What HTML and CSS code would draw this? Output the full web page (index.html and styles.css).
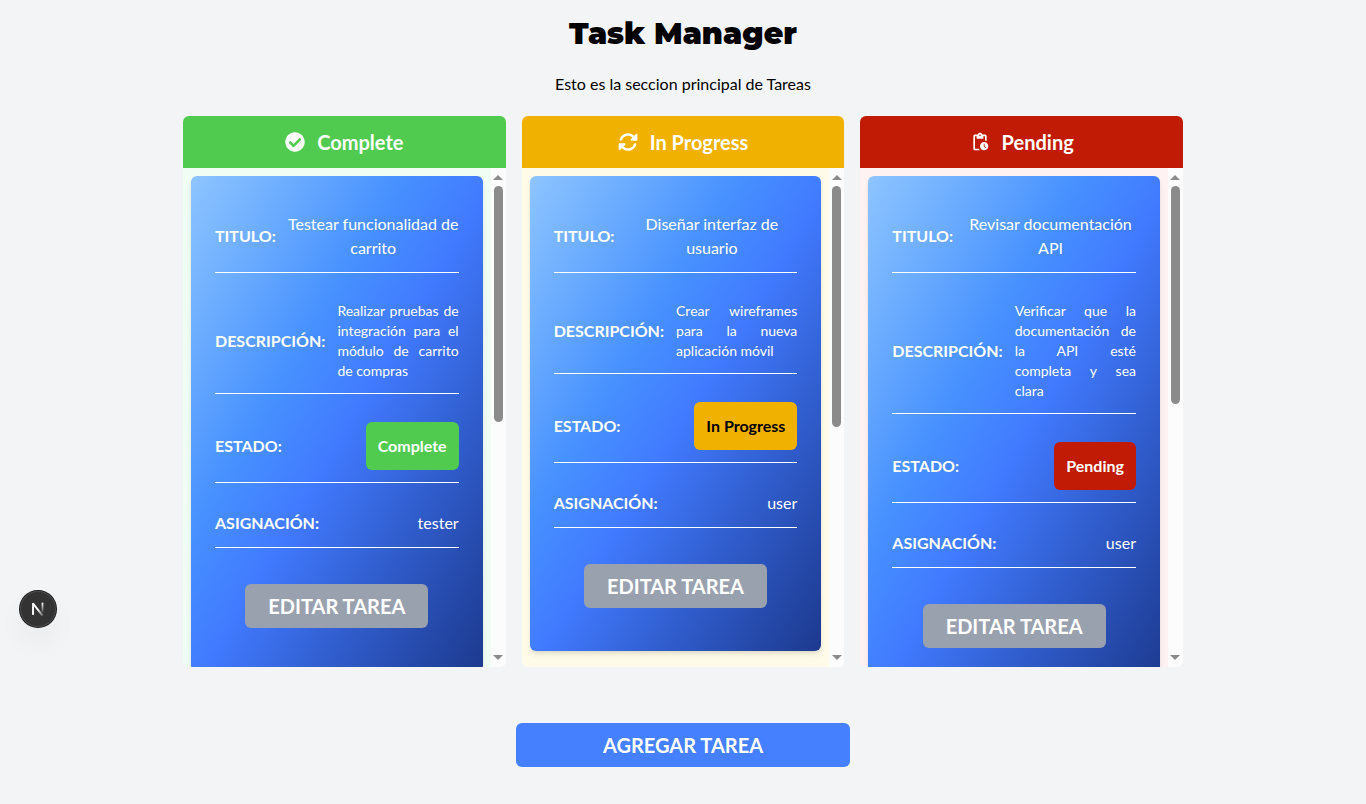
FILE: index.html
```html
<!DOCTYPE html>
<html lang="es">
<head>
<meta charset="utf-8">
<meta name="viewport" content="width=device-width, initial-scale=1">
<title>Task Manager</title>
<link rel="stylesheet" href="styles.css">
</head>
<body>
<main class="page">
  <h1 class="title">Task Manager</h1>
  <p class="subtitle">Esto es la seccion principal de Tareas</p>

  <div class="board">
    <section class="column complete">
      <h2 class="column-head">
        <svg class="icon" viewBox="0 0 512 512" fill="currentColor" aria-hidden="true"><path d="M504 256c0 136.967-111.033 248-248 248S8 392.967 8 256 119.033 8 256 8s248 111.033 248 248zM227.314 387.314l184-184c6.248-6.248 6.248-16.379 0-22.627l-22.627-22.627c-6.248-6.249-16.379-6.249-22.628 0L216 308.118l-70.059-70.059c-6.248-6.248-16.379-6.248-22.628 0l-22.627 22.627c-6.248 6.248-6.248 16.379 0 22.627l104 104c6.249 6.249 16.379 6.249 22.628.001z"/></svg>
        Complete
      </h2>
      <div class="column-body">
        <div class="list">
          <article class="card">
            <dl class="fields">
              <div class="field"><dt>TITULO:</dt><dd class="name">Testear funcionalidad de carrito</dd></div>
              <div class="field"><dt>DESCRIPCIÓN:</dt><dd class="description">Realizar pruebas de integración para el módulo de carrito de compras</dd></div>
              <div class="field"><dt>ESTADO:</dt><dd class="badge">Complete</dd></div>
              <div class="field"><dt>ASIGNACIÓN:</dt><dd>tester</dd></div>
            </dl>
            <button class="button edit" type="button">EDITAR TAREA</button>
          </article>
        </div>
        <div class="scrollbar" aria-hidden="true">
          <span class="arrow up"></span>
          <div class="track"><div class="thumb" style="height: 51%"></div></div>
          <span class="arrow down"></span>
        </div>
      </div>
    </section>

    <section class="column progress">
      <h2 class="column-head">
        <svg class="icon" viewBox="0 0 512 512" fill="currentColor" aria-hidden="true"><path d="M142.9 142.900c62.200-62.200 162.700-62.500 225.300-1L327 183c-6.900 6.900-8.900 17.200-5.200 26.200s12.500 14.800 22.200 14.800H472c13.300 0 24-10.700 24-24V72c0-9.700-5.800-18.500-14.800-22.200s-19.300-1.700-26.200 5.200L413.400 96.600c-87.600-86.500-228.700-86.200-315.800 1C73.200 122 55.600 150.700 44.800 181.400c-5.900 16.700 2.900 34.900 19.500 40.800s34.900-2.900 40.800-19.500c7.700-21.800 20.200-42.300 37.800-59.800zM16 312V440c0 9.700 5.800 18.500 14.800 22.200s19.300 1.700 26.200-5.200l41.600-41.600c87.600 86.500 228.700 86.200 315.800-1c24.400-24.400 42.100-53.100 52.900-83.700c5.900-16.700-2.900-34.900-19.500-40.800s-34.900 2.900-40.800 19.500c-7.700 21.800-20.200 42.300-37.800 59.800c-62.200 62.200-162.700 62.500-225.300 1L185 329c6.900-6.900 8.900-17.200 5.200-26.200s-12.500-14.800-22.200-14.800H40c-13.300 0-24 10.700-24 24z"/></svg>
        In Progress
      </h2>
      <div class="column-body">
        <div class="list">
          <article class="card">
            <dl class="fields">
              <div class="field"><dt>TITULO:</dt><dd class="name">Diseñar interfaz de usuario</dd></div>
              <div class="field"><dt>DESCRIPCIÓN:</dt><dd class="description">Crear wireframes para la nueva aplicación móvil</dd></div>
              <div class="field"><dt>ESTADO:</dt><dd class="badge">In Progress</dd></div>
              <div class="field"><dt>ASIGNACIÓN:</dt><dd>user</dd></div>
            </dl>
            <button class="button edit" type="button">EDITAR TAREA</button>
          </article>
        </div>
        <div class="scrollbar" aria-hidden="true">
          <span class="arrow up"></span>
          <div class="track"><div class="thumb" style="height: 52%"></div></div>
          <span class="arrow down"></span>
        </div>
      </div>
    </section>

    <section class="column pending">
      <h2 class="column-head">
        <svg class="icon" viewBox="0 0 24 24" fill="currentColor" aria-hidden="true"><path d="M17 12c-2.760 0-5 2.240-5 5s2.240 5 5 5 5-2.240 5-5-2.240-5-5-5zm1.650 7.350L16.500 17.200V14h1v2.790l1.850 1.850-.7.710zM18 3h-3.180C14.400 1.840 13.300 1 12 1s-2.400.840-2.820 2H6c-1.100 0-2 .9-2 2v15c0 1.100.9 2 2 2h6.110c-.59-.57-1.070-1.250-1.420-2H6V5h2v3h8V5h2v5.080c.71.100 1.380.310 2 .600V5c0-1.100-.9-2-2-2zm-6 2c-.55 0-1-.45-1-1s.45-1 1-1 1 .45 1 1-.45 1-1 1z"/></svg>
        Pending
      </h2>
      <div class="column-body">
        <div class="list">
          <article class="card">
            <dl class="fields">
              <div class="field"><dt>TITULO:</dt><dd class="name">Revisar documentación API</dd></div>
              <div class="field"><dt>DESCRIPCIÓN:</dt><dd class="description">Verificar que la documentación de la API esté completa y sea clara</dd></div>
              <div class="field"><dt>ESTADO:</dt><dd class="badge">Pending</dd></div>
              <div class="field"><dt>ASIGNACIÓN:</dt><dd>user</dd></div>
            </dl>
            <button class="button edit" type="button">EDITAR TAREA</button>
          </article>
        </div>
        <div class="scrollbar" aria-hidden="true">
          <span class="arrow up"></span>
          <div class="track"><div class="thumb" style="height: 47%"></div></div>
          <span class="arrow down"></span>
        </div>
      </div>
    </section>
  </div>

  <button class="button add" type="button">AGREGAR TAREA</button>
</main>

<button class="dev-badge" type="button" aria-label="Next.js">
  <svg class="dev-logo" viewBox="0 0 40 40" fill="none" aria-hidden="true">
    <defs>
      <linearGradient id="stem" x1="0" y1="13" x2="0" y2="25" gradientUnits="userSpaceOnUse"><stop stop-color="#fff"/><stop offset="1" stop-color="#fff" stop-opacity="0"/></linearGradient>
      <linearGradient id="slash" x1="20" y1="20" x2="26" y2="28" gradientUnits="userSpaceOnUse"><stop stop-color="#fff"/><stop offset="1" stop-color="#fff" stop-opacity="0.2"/></linearGradient>
    </defs>
    <path d="M14.500 26.500V13.500" stroke="#fff" stroke-width="2.200"/>
    <path d="M14.300 13.600 25 27.400" stroke="url(#slash)" stroke-width="2.200"/>
    <path d="M25 13V25" stroke="url(#stem)" stroke-width="2"/>
  </svg>
</button>
</body>
</html>
```
FILE: styles.css
```css
* {
  box-sizing: border-box;
}

body,
h1,
h2,
p,
dl,
dd {
  margin: 0;
}

body {
  background: #f3f4f6;
  color: #000;
  font-family: Lato, sans-serif;
  font-size: 16px;
  line-height: 24px;
}

.page {
  display: flex;
  flex-direction: column;
  align-items: center;
  min-height: 100vh;
  padding: 16px;
}

.title {
  font-family: Montserrat, Inter, sans-serif;
  font-size: 30px;
  font-weight: 900;
  line-height: 36px;
}

.subtitle {
  margin-top: 20px;
}

.board {
  display: grid;
  grid-template-columns: repeat(3, minmax(0, 1fr));
  gap: 16px;
  width: 100%;
  max-width: 1000px;
  margin-top: 20px;
}

.column {
  border-radius: 6px;
  overflow: hidden;
}

.complete {
  --accent: #50cb50;
  --tint: #f0fdf4;
  --badge-text: #fff;
}

.progress {
  --accent: #f0b100;
  --tint: #fefce8;
  --badge-text: #000;
}

.pending {
  --accent: #c11a05;
  --tint: #fef2f2;
  --badge-text: #fff;
}

.column-head {
  display: flex;
  align-items: center;
  justify-content: center;
  gap: 12px;
  padding: 12px;
  background: var(--accent);
  color: #fff;
  font-size: 20px;
  font-weight: 700;
  line-height: 28px;
}

.icon {
  width: 20px;
  height: 20px;
}

.column-body {
  display: flex;
  height: calc(100vh - 305px);
  min-height: 240px;
  background: var(--tint);
}

.list {
  flex: 1;
  min-width: 0;
  padding: 8px;
  overflow-y: auto;
  scrollbar-width: none;
}

.card {
  display: flex;
  flex-direction: column;
  align-items: center;
  gap: 36px;
  padding: 24px 24px 43px;
  border-radius: 6px;
  background: linear-gradient(to bottom right in oklab, #8ec5ff, #4791ff 36%, #417aff 52%, #1c398e);
  box-shadow: 0 4px 6px -1px rgba(0, 0, 0, 0.1), 0 2px 4px -2px rgba(0, 0, 0, 0.1);
  color: #fff;
}

.fields {
  display: flex;
  flex-direction: column;
  gap: 16px;
  width: 100%;
}

.field {
  display: flex;
  align-items: center;
  justify-content: space-between;
  gap: 12px;
  padding: 12px 0;
  border-bottom: 1px solid #fff;
}

.field dt {
  font-weight: 700;
}

.name {
  flex: 1;
  text-align: center;
}

.description {
  flex: 1;
  font-size: 14px;
  line-height: 20px;
  text-align: justify;
}

.badge {
  padding: 12px;
  border-radius: 6px;
  background: var(--accent);
  color: var(--badge-text);
  font-weight: 700;
}

.button {
  padding: 8px;
  border: 0;
  border-radius: 6px;
  color: #fff;
  font-family: inherit;
  font-size: 20px;
  font-weight: 700;
  line-height: 28px;
  cursor: pointer;
}

.edit {
  width: 75%;
  background: #99a1af;
}

.add {
  width: 25%;
  margin-top: 56px;
  background: #4480ff;
}

.scrollbar {
  display: flex;
  flex-direction: column;
  align-items: center;
  gap: 6px;
  width: 15px;
  padding: 7px 3px;
  background: #fcfcfc;
}

.arrow {
  border: 5px solid transparent;
}

.up {
  border-top: 0;
  border-bottom-color: #8b8b8b;
}

.down {
  border-bottom: 0;
  border-top-color: #8b8b8b;
}

.track {
  flex: 1;
  width: 100%;
}

.thumb {
  border-radius: 5px;
  background: #8b8b8b;
}

.dev-badge {
  position: fixed;
  bottom: 177px;
  left: 20px;
  display: grid;
  width: 36px;
  height: 36px;
  padding: 0;
  border: 0;
  border-radius: 50%;
  background: #333;
  box-shadow: 0 0 0 1px #171717, inset 0 0 0 1px #4a4a4a, 0 16px 32px -8px rgba(0, 0, 0, 0.14);
  cursor: pointer;
}

.dev-logo {
  width: 36px;
  height: 36px;
}
```
